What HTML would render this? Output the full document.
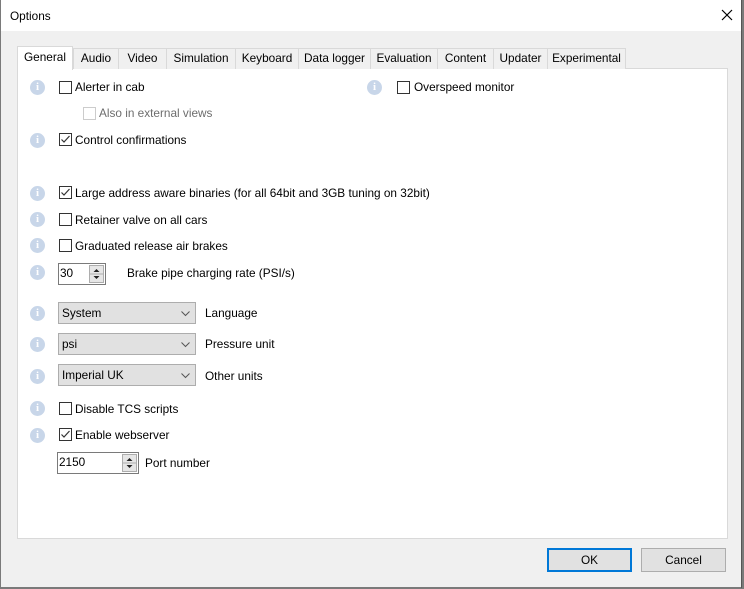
<!DOCTYPE html>
<html><head><meta charset="utf-8"><style>
*{box-sizing:border-box;margin:0;padding:0}
body{width:744px;height:589px;background:#7a7a7a;font-family:"Liberation Sans",sans-serif;font-size:11.8px;color:#000;position:relative;overflow:hidden}
.win{position:absolute;left:0;top:0;width:742px;height:588px;background:#f0f0f0;box-shadow:inset 1px 0 0 #7a7a7a,inset -1px 0 0 #555,inset 0 -1px 0 #7a7a7a}
.title{position:absolute;left:1px;top:0;width:740px;height:31px;background:#fff}
.a{position:absolute;white-space:nowrap}
.tab{position:absolute;top:48px;height:21px;border:1px solid #d9d9d9;border-bottom:none;background:#f0f0f0;text-align:center;line-height:19px}
.panel{position:absolute;left:17px;top:68px;width:711px;height:471px;background:#fff;border:1px solid #d9d9d9}
.info{position:absolute;width:15px;height:15px;border-radius:50%;background:#c8d6e9;color:#fff;font-weight:bold;font-size:11px;text-align:center;line-height:15px;font-family:"Liberation Serif",serif}
.cb{position:absolute;width:13px;height:13px;border:1px solid #333;background:#fff}
.cb.d{border-color:#ccc}
.cb svg{position:absolute;left:0px;top:0px}
.combo{position:absolute;height:22px;width:138px;background:#e1e1e1;border:1px solid #adadad;padding-left:3px;line-height:20px}
.combo svg{position:absolute;right:5px;top:8px}
.spin{position:absolute;height:22px;border:1px solid #7a7a7a;background:#fff;padding-left:1px;line-height:18px}
.spin .b{position:absolute;right:1px;top:1px;width:15px;height:18px;border:1px solid #adadad;background:#e6e6e6}
.btn{position:absolute;top:548px;width:85px;height:24px;background:#e1e1e1;border:1px solid #adadad;text-align:center;line-height:22px}
</style></head><body>
<div class="win">
<div class="title"></div>
<div class="a" style="left:10px;top:9px">Options</div>
<svg class="a" style="left:721px;top:9px" width="12" height="12"><path d="M1 1L11 11M11 1L1 11" stroke="#000" stroke-width="1.2"/></svg>
<div class="panel"></div>
<div class="tab" style="left:73px;width:46px">Audio</div>
<div class="tab" style="left:118px;width:49px">Video</div>
<div class="tab" style="left:166px;width:70px">Simulation</div>
<div class="tab" style="left:235px;width:64px">Keyboard</div>
<div class="tab" style="left:298px;width:73px">Data logger</div>
<div class="tab" style="left:370px;width:68px">Evaluation</div>
<div class="tab" style="left:437px;width:57px">Content</div>
<div class="tab" style="left:493px;width:55px">Updater</div>
<div class="tab" style="left:547px;width:79px">Experimental</div>
<div class="tab" style="left:17px;top:46px;width:56px;height:24px;background:#fff;line-height:21px">General</div>

<div class="info" style="left:30px;top:80px">i</div><div class="cb" style="left:59px;top:81px"></div><div class="a" style="left:75px;top:80px">Alerter in cab</div>
<div class="info" style="left:367px;top:80px">i</div><div class="cb" style="left:397px;top:81px"></div><div class="a" style="left:414px;top:80px">Overspeed monitor</div>
<div class="cb d" style="left:83px;top:107px"></div><div class="a" style="left:99px;top:106px;color:#6d6d6d">Also in external views</div>
<div class="info" style="left:30px;top:133px">i</div><div class="cb" style="left:59px;top:133px"><svg width="11" height="11"><path d="M1.5 5.5L4 8L9.5 2" stroke="#333" fill="none" stroke-width="1.2"/></svg></div><div class="a" style="left:75px;top:133px">Control confirmations</div>

<div class="info" style="left:30px;top:186px">i</div><div class="cb" style="left:59px;top:186px"><svg width="11" height="11"><path d="M1.5 5.5L4 8L9.5 2" stroke="#333" fill="none" stroke-width="1.2"/></svg></div><div class="a" style="left:75px;top:186px">Large address aware binaries (for all 64bit and 3GB tuning on 32bit)</div>
<div class="info" style="left:30px;top:212px">i</div><div class="cb" style="left:59px;top:213px"></div><div class="a" style="left:75px;top:213px">Retainer valve on all cars</div>
<div class="info" style="left:30px;top:238px">i</div><div class="cb" style="left:59px;top:239px"></div><div class="a" style="left:75px;top:239px">Graduated release air brakes</div>
<div class="info" style="left:30px;top:265px">i</div><div class="spin" style="left:58px;top:263px;width:48px">30<div class="b"><svg width="13" height="16"><path d="M3.5 6L6.5 3L9.5 6Z M3.5 10L6.5 13L9.5 10Z" fill="#222"/><path d="M0 8H13" stroke="#adadad"/></svg></div></div><div class="a" style="left:127px;top:266px">Brake pipe charging rate (PSI/s)</div>

<div class="info" style="left:30px;top:306px">i</div><div class="combo" style="left:58px;top:302px">System<svg width="9" height="6"><path d="M0.5 0.5L4.5 4.5L8.5 0.5" stroke="#555" fill="none"/></svg></div><div class="a" style="left:205px;top:306px">Language</div>
<div class="info" style="left:30px;top:337px">i</div><div class="combo" style="left:58px;top:333px">psi<svg width="9" height="6"><path d="M0.5 0.5L4.5 4.5L8.5 0.5" stroke="#555" fill="none"/></svg></div><div class="a" style="left:205px;top:337px">Pressure unit</div>
<div class="info" style="left:30px;top:369px">i</div><div class="combo" style="left:58px;top:364px">Imperial UK<svg width="9" height="6"><path d="M0.5 0.5L4.5 4.5L8.5 0.5" stroke="#555" fill="none"/></svg></div><div class="a" style="left:205px;top:369px">Other units</div>

<div class="info" style="left:30px;top:401px">i</div><div class="cb" style="left:59px;top:402px"></div><div class="a" style="left:75px;top:402px">Disable TCS scripts</div>
<div class="info" style="left:30px;top:428px">i</div><div class="cb" style="left:59px;top:428px"><svg width="11" height="11"><path d="M1.5 5.5L4 8L9.5 2" stroke="#333" fill="none" stroke-width="1.2"/></svg></div><div class="a" style="left:75px;top:428px">Enable webserver</div>
<div class="spin" style="left:57px;top:452px;width:82px">2150<div class="b"><svg width="13" height="16"><path d="M3.5 6L6.5 3L9.5 6Z M3.5 10L6.5 13L9.5 10Z" fill="#222"/><path d="M0 8H13" stroke="#adadad"/></svg></div></div><div class="a" style="left:145px;top:456px">Port number</div>

<div class="btn" style="left:547px;border:2px solid #0078d7;line-height:20px">OK</div>
<div class="btn" style="left:641px">Cancel</div>
</div>
</body></html>
